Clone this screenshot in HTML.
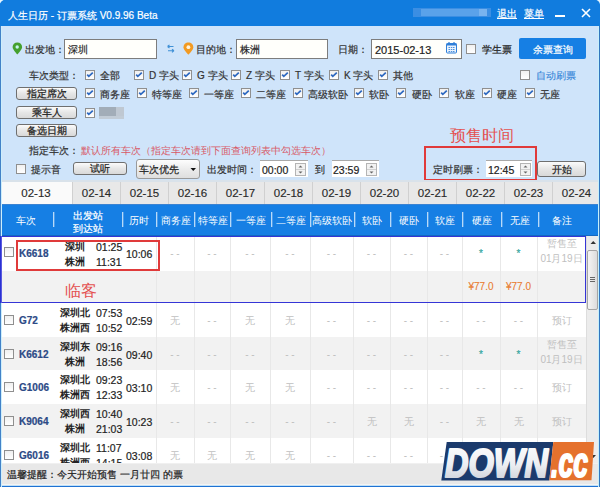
<!DOCTYPE html>
<html><head><meta charset="utf-8">
<style>
html,body{margin:0;padding:0;width:600px;height:487px;overflow:hidden;}
body{position:relative;background:#cfe4fa;font-family:"Liberation Sans",sans-serif;font-size:10px;color:#333;}
.a{position:absolute;}
.t{position:absolute;white-space:nowrap;line-height:12px;font-size:10px;-webkit-text-stroke:0.2px currentColor;margin-top:1px;}
#title{left:0;top:0;width:600px;height:26px;background:#117cde;}
.frame-l{left:0;top:26px;width:1px;height:461px;background:#4282c8;box-shadow:1px 0 0 #cdeefc;}
.frame-r{left:599px;top:26px;width:1px;height:461px;background:#3276be;box-shadow:-1px 0 0 #c6f0fc;}
.inp{position:absolute;background:#fffffb;border:1px solid #7d7d7d;box-sizing:border-box;}
.cb{position:absolute;width:10px;height:10px;box-sizing:border-box;border:1px solid #8f8f8f;background:linear-gradient(#f0f0f0,#ffffff);}
.btn{position:absolute;box-sizing:border-box;border:1px solid #6f6f6f;border-radius:3px;background:linear-gradient(#fbfbfb,#e6e6e6 50%,#d9d9d9);text-align:center;color:#222;}
.spin{position:absolute;width:12px;box-sizing:border-box;border:1px solid #b9b9b9;background:linear-gradient(#f3f3f3,#dedede);}
.tab{position:absolute;top:182px;height:22px;box-sizing:border-box;background:#e8e8e8;border-left:1px solid #d0d0d0;text-align:center;line-height:22px;font-size:11.5px;color:#2a2a2a;-webkit-text-stroke:0.15px #2a2a2a;}
.hd{position:absolute;top:205px;height:31px;line-height:31px;color:#fff;text-align:center;font-size:10px;}
.sep{position:absolute;top:212px;width:1px;height:15px;background:#b8daf8;box-shadow:1px 0 0 #4d9cea;}
.vl{position:absolute;width:1px;background:#e8e8e8;}
.g{color:#bfbfbf;-webkit-text-stroke:0;}
.bt{-webkit-text-stroke:0.25px #222;}
.tn{color:#2c4a86;font-weight:bold;font-size:10px;}
.st{color:#222;font-weight:bold;-webkit-text-stroke:0;}
.tm{color:#222;font-size:10.5px;}
</style></head>
<body>
<!-- title bar -->
<div id="title" class="a"></div>
<div class="t" style="left:8px;top:9px;color:#fff;font-size:10px;">人生日历 - 订票系统 V0.9.96 Beta</div>
<div class="a" style="left:413px;top:8px;width:78px;height:9px;background:#3b8ee3;"></div><div class="a" style="left:421px;top:9px;width:66px;height:7px;background:#5aa2ea;filter:blur(0.4px);"></div><div class="a" style="left:479px;top:9px;width:8px;height:7px;background:#78b3ef;"></div>
<div class="t" style="left:497px;top:7px;color:#fff;text-decoration:underline;">退出</div>
<div class="t" style="left:524px;top:7px;color:#fff;text-decoration:underline;">菜单</div>
<div class="a" style="left:555px;top:15px;width:10px;height:2px;background:#fff;"></div>
<svg class="a" style="left:581px;top:8px" width="10" height="10"><path d="M1 1L9 9M9 1L1 9" stroke="#fff" stroke-width="1.6"/></svg>

<svg class="a" style="left:0;top:0" width="4" height="4"><path d="M0 0H3.5Q1 1 0 3.5Z" fill="#e6f6ff"/></svg><svg class="a" style="left:596px;top:0" width="4" height="5"><path d="M0.5 0H4V4.5Q3.5 1 0.5 0Z" fill="#e6f6ff"/></svg>

<!-- row 1 -->
<svg class="a" style="left:12px;top:42px" width="11" height="13" viewBox="0 0 11 13"><path d="M5.3 0.6C2.6 0.6 0.6 2.6 0.6 5.1 0.6 7.9 5.3 12.6 5.3 12.6S10.1 7.9 10.1 5.1C10.1 2.6 8.1 0.6 5.3 0.6Z" fill="#45a02e"/><circle cx="5.2" cy="5" r="1.7" fill="#c6f5ee"/></svg>
<div class="t" style="left:25px;top:43px;">出发地：</div>
<div class="inp" style="left:64px;top:39px;width:93px;height:20px;"></div>
<div class="t" style="left:68px;top:43px;color:#222;">深圳</div>
<svg class="a" style="left:166px;top:44px" width="10" height="10" viewBox="0 0 10 10"><path d="M1.5 2.5H7.5M1.5 2.5L3.5 0.8M1.5 2.5L3.5 4M8 6.7H2M8 6.7L6 5.2M8 6.7L6 8.4" stroke="#3f90d6" stroke-width="1.1" fill="none"/></svg>
<svg class="a" style="left:183px;top:42px" width="11" height="13" viewBox="0 0 11 13"><path d="M5.4 0.5C2.6 0.5 0.5 2.6 0.5 5.2 0.5 8.1 5.4 12.6 5.4 12.6S10.3 8.1 10.3 5.2C10.3 2.6 8.2 0.5 5.4 0.5Z" fill="#f29a22"/><circle cx="5.4" cy="5.2" r="1.9" fill="#fff3dc"/></svg>
<div class="t" style="left:196px;top:43px;">目的地：</div>
<div class="inp" style="left:236px;top:39px;width:92px;height:20px;"></div>
<div class="t" style="left:240px;top:43px;color:#222;">株洲</div>
<div class="t" style="left:338px;top:43px;">日期：</div>
<div class="inp" style="left:371px;top:39px;width:91px;height:20px;"></div>
<div class="t" style="left:375px;top:43px;color:#222;font-size:11px;">2015-02-13</div>
<svg class="a" style="left:446px;top:42px" width="12" height="12" viewBox="0 0 12 12"><rect x="0.5" y="1.5" width="10" height="9.5" rx="1" fill="#eaf3fd" stroke="#2f7fd8"/><rect x="0.5" y="1.5" width="10" height="2" fill="#2f7fd8"/><path d="M3 0V2M8 0V2" stroke="#2f7fd8" stroke-width="1.2"/><g fill="#4d93de"><rect x="2.5" y="5" width="1.5" height="1"/><rect x="4.8" y="5" width="1.5" height="1"/><rect x="7" y="5" width="1.5" height="1"/><rect x="2.5" y="7" width="1.5" height="1"/><rect x="4.8" y="7" width="1.5" height="1"/><rect x="7" y="7" width="1.5" height="1"/><rect x="2.5" y="9" width="1.5" height="1"/><rect x="4.8" y="9" width="1.5" height="1"/><rect x="7" y="9" width="1.5" height="1"/></g></svg>
<div class="cb" style="left:466px;top:44px;"></div>
<div class="t bt" style="left:482px;top:43px;">学生票</div>
<div class="a" style="left:519px;top:38px;width:67px;height:21px;background:#167fe4;border-radius:2px;"></div>
<div class="t" style="left:519px;top:43px;width:67px;text-align:center;color:#fff;">余票查询</div>

<!-- row 2 -->
<div class="t" style="left:29px;top:69px;">车次类型：</div>
<div class="cb" style="left:85px;top:70px;"><svg width="8" height="8" style="position:absolute;left:0;top:0"><path d="M1.2 3.6L2.8 5.4L6.8 1.6" stroke="#2d68c0" stroke-width="1.7" fill="none"/></svg></div><div class="t" style="left:100px;top:69px;">全部</div>
<div class="cb" style="left:134px;top:70px;"><svg width="8" height="8" style="position:absolute;left:0;top:0"><path d="M1.2 3.6L2.8 5.4L6.8 1.6" stroke="#2d68c0" stroke-width="1.7" fill="none"/></svg></div><div class="t" style="left:149px;top:69px;">D 字头</div>
<div class="cb" style="left:182px;top:70px;"><svg width="8" height="8" style="position:absolute;left:0;top:0"><path d="M1.2 3.6L2.8 5.4L6.8 1.6" stroke="#2d68c0" stroke-width="1.7" fill="none"/></svg></div><div class="t" style="left:197px;top:69px;">G 字头</div>
<div class="cb" style="left:231px;top:70px;"><svg width="8" height="8" style="position:absolute;left:0;top:0"><path d="M1.2 3.6L2.8 5.4L6.8 1.6" stroke="#2d68c0" stroke-width="1.7" fill="none"/></svg></div><div class="t" style="left:246px;top:69px;">Z 字头</div>
<div class="cb" style="left:280px;top:70px;"><svg width="8" height="8" style="position:absolute;left:0;top:0"><path d="M1.2 3.6L2.8 5.4L6.8 1.6" stroke="#2d68c0" stroke-width="1.7" fill="none"/></svg></div><div class="t" style="left:295px;top:69px;">T 字头</div>
<div class="cb" style="left:329px;top:70px;"><svg width="8" height="8" style="position:absolute;left:0;top:0"><path d="M1.2 3.6L2.8 5.4L6.8 1.6" stroke="#2d68c0" stroke-width="1.7" fill="none"/></svg></div><div class="t" style="left:344px;top:69px;">K 字头</div>
<div class="cb" style="left:378px;top:70px;"><svg width="8" height="8" style="position:absolute;left:0;top:0"><path d="M1.2 3.6L2.8 5.4L6.8 1.6" stroke="#2d68c0" stroke-width="1.7" fill="none"/></svg></div><div class="t" style="left:393px;top:69px;">其他</div>
<div class="cb" style="left:520px;top:70px;"></div><div class="t" style="left:536px;top:69px;color:#3585d8;-webkit-text-stroke:0.1px #3585d8;">自动刷票</div>

<!-- row 3 -->
<div class="btn" style="left:16px;top:87px;width:61px;height:13px;"></div><div class="t bt" style="left:16px;top:87px;width:61px;text-align:center;color:#222;">指定席次</div>
<div class="cb" style="left:85px;top:88px;"><svg width="8" height="8" style="position:absolute;left:0;top:0"><path d="M1.2 3.6L2.8 5.4L6.8 1.6" stroke="#2d68c0" stroke-width="1.7" fill="none"/></svg></div><div class="t" style="left:100px;top:88px;">商务座</div>
<div class="cb" style="left:137px;top:88px;"><svg width="8" height="8" style="position:absolute;left:0;top:0"><path d="M1.2 3.6L2.8 5.4L6.8 1.6" stroke="#2d68c0" stroke-width="1.7" fill="none"/></svg></div><div class="t" style="left:152px;top:88px;">特等座</div>
<div class="cb" style="left:189px;top:88px;"><svg width="8" height="8" style="position:absolute;left:0;top:0"><path d="M1.2 3.6L2.8 5.4L6.8 1.6" stroke="#2d68c0" stroke-width="1.7" fill="none"/></svg></div><div class="t" style="left:204px;top:88px;">一等座</div>
<div class="cb" style="left:241px;top:88px;"><svg width="8" height="8" style="position:absolute;left:0;top:0"><path d="M1.2 3.6L2.8 5.4L6.8 1.6" stroke="#2d68c0" stroke-width="1.7" fill="none"/></svg></div><div class="t" style="left:256px;top:88px;">二等座</div>
<div class="cb" style="left:293px;top:88px;"><svg width="8" height="8" style="position:absolute;left:0;top:0"><path d="M1.2 3.6L2.8 5.4L6.8 1.6" stroke="#2d68c0" stroke-width="1.7" fill="none"/></svg></div><div class="t" style="left:308px;top:88px;">高级软卧</div>
<div class="cb" style="left:354px;top:88px;"><svg width="8" height="8" style="position:absolute;left:0;top:0"><path d="M1.2 3.6L2.8 5.4L6.8 1.6" stroke="#2d68c0" stroke-width="1.7" fill="none"/></svg></div><div class="t" style="left:369px;top:88px;">软卧</div>
<div class="cb" style="left:396px;top:88px;"><svg width="8" height="8" style="position:absolute;left:0;top:0"><path d="M1.2 3.6L2.8 5.4L6.8 1.6" stroke="#2d68c0" stroke-width="1.7" fill="none"/></svg></div><div class="t" style="left:412px;top:88px;">硬卧</div>
<div class="cb" style="left:439px;top:88px;"><svg width="8" height="8" style="position:absolute;left:0;top:0"><path d="M1.2 3.6L2.8 5.4L6.8 1.6" stroke="#2d68c0" stroke-width="1.7" fill="none"/></svg></div><div class="t" style="left:455px;top:88px;">软座</div>
<div class="cb" style="left:482px;top:88px;"><svg width="8" height="8" style="position:absolute;left:0;top:0"><path d="M1.2 3.6L2.8 5.4L6.8 1.6" stroke="#2d68c0" stroke-width="1.7" fill="none"/></svg></div><div class="t" style="left:497px;top:88px;">硬座</div>
<div class="cb" style="left:525px;top:88px;"><svg width="8" height="8" style="position:absolute;left:0;top:0"><path d="M1.2 3.6L2.8 5.4L6.8 1.6" stroke="#2d68c0" stroke-width="1.7" fill="none"/></svg></div><div class="t" style="left:540px;top:88px;">无座</div>

<!-- row 4,5 -->
<div class="btn" style="left:16px;top:106px;width:61px;height:13px;"></div><div class="t bt" style="left:16px;top:106px;width:61px;text-align:center;color:#222;">乘车人</div>
<div class="cb" style="left:85px;top:108px;"><svg width="8" height="8" style="position:absolute;left:0;top:0"><path d="M1.2 3.6L2.8 5.4L6.8 1.6" stroke="#2d68c0" stroke-width="1.7" fill="none"/></svg></div>
<div class="a" style="left:99px;top:116px;width:25px;height:3px;background:#c2ccd6;filter:blur(0.5px);"></div><div class="a" style="left:99px;top:107px;width:17px;height:9px;background:#a2adb8;filter:blur(0.5px);"></div><div class="a" style="left:116px;top:107px;width:8px;height:9px;background:#bfc8d2;filter:blur(0.5px);"></div>
<div class="btn" style="left:16px;top:124px;width:61px;height:13px;"></div><div class="t bt" style="left:16px;top:124px;width:61px;text-align:center;color:#222;">备选日期</div>

<!-- row 6 -->
<div class="t" style="left:29px;top:144px;">指定车次：</div>
<div class="t" style="left:81px;top:144px;color:#d85a68;-webkit-text-stroke:0;">默认所有车次（指定车次请到下面查询列表中勾选车次）</div>
<div class="t" style="left:450px;top:126px;color:#e45050;font-size:15.5px;line-height:18px;-webkit-text-stroke:0;">预售时间</div>

<!-- row 7 -->
<div class="cb" style="left:16px;top:164px;"></div><div class="t" style="left:31px;top:163px;">提示音</div>
<div class="btn" style="left:73px;top:162px;width:54px;height:13px;"></div><div class="t" style="left:73px;top:162px;width:54px;text-align:center;color:#222;">试听</div>
<div class="btn" style="left:136px;top:159px;width:64px;height:20px;border-color:#9a9a9a;background:linear-gradient(#fdfdfd,#ececec 50%,#dedede);"></div>
<div class="t" style="left:139px;top:163px;color:#222;">车次优先</div>
<svg class="a" style="left:190px;top:167px" width="7" height="5"><path d="M0.5 1H6L3.25 4Z" fill="#111"/></svg>
<div class="t" style="left:207px;top:163px;">出发时间：</div>
<div class="a" style="left:260px;top:160px;width:48px;height:17px;background:#fff;border-top:1px solid #a9a9a9;box-sizing:border-box;"></div>
<div class="t" style="left:262px;top:163px;color:#222;font-size:10.5px;">00:00</div>
<div class="a" style="left:295px;top:163px;width:11px;height:13px;"><svg width="11" height="13" style="position:absolute;left:0;top:0"><rect x="0.5" y="0.5" width="10" height="12" fill="#f2f2f2" stroke="#b4b4b4"/><path d="M1 6.5H10" stroke="#d0d0d0"/><path d="M3.5 4.5H7.5L5.5 2.5Z" fill="#666"/><path d="M3.5 8.5H7.5L5.5 10.5Z" fill="#666"/></svg></div>
<div class="t" style="left:315px;top:163px;">到</div>
<div class="a" style="left:332px;top:160px;width:47px;height:17px;background:#fff;border-top:1px solid #a9a9a9;box-sizing:border-box;"></div>
<div class="t" style="left:333px;top:163px;color:#222;font-size:10.5px;">23:59</div>
<div class="a" style="left:366px;top:163px;width:11px;height:13px;"><svg width="11" height="13" style="position:absolute;left:0;top:0"><rect x="0.5" y="0.5" width="10" height="12" fill="#f2f2f2" stroke="#b4b4b4"/><path d="M1 6.5H10" stroke="#d0d0d0"/><path d="M3.5 4.5H7.5L5.5 2.5Z" fill="#666"/><path d="M3.5 8.5H7.5L5.5 10.5Z" fill="#666"/></svg></div>
<div class="a" style="left:424px;top:146px;width:113px;height:35px;box-sizing:border-box;border:2px solid #e03a3a;"></div>
<div class="t" style="left:433px;top:163px;">定时刷票：</div>
<div class="a" style="left:486px;top:160px;width:46px;height:17px;background:#fff;border-top:1px solid #a9a9a9;box-sizing:border-box;"></div>
<div class="t" style="left:488px;top:163px;color:#222;font-size:10.5px;">12:45</div>
<div class="a" style="left:520px;top:163px;width:11px;height:13px;"><svg width="11" height="13" style="position:absolute;left:0;top:0"><rect x="0.5" y="0.5" width="10" height="12" fill="#f2f2f2" stroke="#b4b4b4"/><path d="M1 6.5H10" stroke="#d0d0d0"/><path d="M3.5 4.5H7.5L5.5 2.5Z" fill="#666"/><path d="M3.5 8.5H7.5L5.5 10.5Z" fill="#666"/></svg></div>
<div class="btn" style="left:537px;top:161px;width:49px;height:16px;"></div><div class="t" style="left:537px;top:163px;width:49px;text-align:center;color:#222;">开始</div>

<!-- tabs -->
<div class="a" style="left:0;top:180px;width:600px;height:2px;background:#d9e2ea;"></div>
<div class="tab" style="left:0;width:72px;background:#fafafa;border-left:none;">02-13</div>
<div class="tab" style="left:72px;width:48px;">02-14</div>
<div class="tab" style="left:120px;width:48px;">02-15</div>
<div class="tab" style="left:168px;width:48px;">02-16</div>
<div class="tab" style="left:216px;width:48px;">02-17</div>
<div class="tab" style="left:264px;width:48px;">02-18</div>
<div class="tab" style="left:312px;width:48px;">02-19</div>
<div class="tab" style="left:360px;width:48px;">02-20</div>
<div class="tab" style="left:408px;width:48px;">02-21</div>
<div class="tab" style="left:456px;width:48px;">02-22</div>
<div class="tab" style="left:504px;width:48px;">02-23</div>
<div class="tab" style="left:552px;width:48px;">02-24</div>

<!-- header -->
<div class="a" style="left:0;top:204px;width:600px;height:32px;background:#167fe4;"></div><div class="a" style="left:0;top:204px;width:600px;height:1px;background:#3b83d2;"></div>
<div class="a" style="left:0;top:235px;width:600px;height:1px;background:#1468c0;"></div>
<div class="hd" style="left:0;width:52px;">车次</div>
<div class="t" style="left:53px;top:208px;width:69px;text-align:center;color:#fff;line-height:13px;">出发站<br>到达站</div>
<div class="hd" style="left:122px;width:34px;">历时</div>
<div class="hd" style="left:156px;width:39px;">商务座</div>
<div class="hd" style="left:195px;width:35px;">特等座</div>
<div class="hd" style="left:230px;width:41px;">一等座</div>
<div class="hd" style="left:271px;width:39px;">二等座</div>
<div class="hd" style="left:310px;width:44px;">高级软卧</div>
<div class="hd" style="left:354px;width:36px;">软卧</div>
<div class="hd" style="left:390px;width:37px;">硬卧</div>
<div class="hd" style="left:427px;width:35px;">软座</div>
<div class="hd" style="left:462px;width:39px;">硬座</div>
<div class="hd" style="left:501px;width:37px;">无座</div>
<div class="hd" style="left:538px;width:48px;">备注</div>
<div class="sep" style="left:53px"></div><div class="sep" style="left:122px"></div><div class="sep" style="left:156px"></div><div class="sep" style="left:194px"></div><div class="sep" style="left:230px"></div><div class="sep" style="left:271px"></div><div class="sep" style="left:310px"></div><div class="sep" style="left:354px"></div><div class="sep" style="left:390px"></div><div class="sep" style="left:427px"></div><div class="sep" style="left:462px"></div><div class="sep" style="left:501px"></div><div class="sep" style="left:538px"></div>

<!-- body rows -->
<div class="a" style="left:1px;top:236px;width:585px;height:35px;background:#fff;"></div>
<div class="a" style="left:1px;top:271px;width:585px;height:31px;background:#f2f2f2;"></div>
<div class="a" style="left:1px;top:303px;width:585px;height:34px;background:#fff;"></div>
<div class="a" style="left:1px;top:337px;width:585px;height:33px;background:#f2f2f2;"></div>
<div class="a" style="left:1px;top:370px;width:585px;height:34px;background:#fff;"></div>
<div class="a" style="left:1px;top:404px;width:585px;height:34px;background:#f2f2f2;"></div>
<div class="a" style="left:1px;top:438px;width:585px;height:25px;background:#fff;"></div>
<!-- grid lines -->
<div class="vl" style="left:156px;top:236px;height:227px"></div>
<div class="vl" style="left:194px;top:236px;height:227px"></div>
<div class="vl" style="left:230px;top:236px;height:227px"></div>
<div class="vl" style="left:270px;top:236px;height:227px"></div>
<div class="vl" style="left:310px;top:236px;height:227px"></div>
<div class="vl" style="left:353px;top:236px;height:227px"></div>
<div class="vl" style="left:390px;top:236px;height:227px"></div>
<div class="vl" style="left:427px;top:236px;height:227px"></div>
<div class="vl" style="left:462px;top:236px;height:227px"></div>
<div class="vl" style="left:500px;top:236px;height:227px"></div>
<div class="vl" style="left:537px;top:236px;height:227px"></div>
<!-- selection border -->
<div class="a" style="left:0;top:236px;width:586px;height:67px;box-sizing:border-box;border:1px solid #3535d6;"></div>

<!-- row K6618 -->
<div class="cb" style="left:4px;top:247px;"></div>
<div class="t tn" style="left:19px;top:247px;">K6618</div>
<div class="t st" style="left:65px;top:240px;">深圳</div>
<div class="t st" style="left:65px;top:255px;">株洲</div>
<div class="t tm" style="left:96px;top:240px;">01:25</div>
<div class="t tm" style="left:96px;top:255px;">11:31</div>
<div class="t tm" style="left:126px;top:247px;">10:06</div>
<div class="a" style="left:16px;top:240px;width:144px;height:31px;box-sizing:border-box;border:2px solid #e03a3a;"></div>
<div class="t g" style="left:156px;top:247px;width:38px;text-align:center;">- -</div>
<div class="t g" style="left:194px;top:247px;width:36px;text-align:center;">- -</div>
<div class="t g" style="left:230px;top:247px;width:40px;text-align:center;">- -</div>
<div class="t g" style="left:270px;top:247px;width:40px;text-align:center;">- -</div>
<div class="t g" style="left:310px;top:247px;width:43px;text-align:center;">- -</div>
<div class="t g" style="left:353px;top:247px;width:37px;text-align:center;">- -</div>
<div class="t g" style="left:390px;top:247px;width:37px;text-align:center;">- -</div>
<div class="t g" style="left:427px;top:247px;width:35px;text-align:center;">- -</div>
<div class="t" style="left:462px;top:247px;width:38px;text-align:center;color:#33a6a0;">*</div>
<div class="t" style="left:500px;top:247px;width:37px;text-align:center;color:#33a6a0;">*</div>
<div class="t g" style="left:537px;top:235px;width:49px;text-align:center;line-height:15px;">暂售至<br>01月19日</div>
<div class="t" style="left:65px;top:281px;color:#e45050;font-size:16px;line-height:18px;-webkit-text-stroke:0;">临客</div>
<div class="t" style="left:462px;top:280px;width:38px;text-align:center;color:#e97c30;-webkit-text-stroke:0.1px #e97c30;">¥77.0</div>
<div class="t" style="left:500px;top:280px;width:37px;text-align:center;color:#e97c30;-webkit-text-stroke:0.1px #e97c30;">¥77.0</div>

<!-- other rows -->
<div id="rows"></div><div class="cb" style="left:4px;top:315px;"></div>
<div class="t tn" style="left:19px;top:314px;">G72</div>
<div class="t st" style="left:58px;top:306px;width:34px;text-align:center;">深圳北</div>
<div class="t st" style="left:58px;top:321px;width:34px;text-align:center;">株洲西</div>
<div class="t tm" style="left:96px;top:306px;">07:53</div>
<div class="t tm" style="left:96px;top:321px;">10:52</div>
<div class="t tm" style="left:126px;top:314px;">02:59</div>
<div class="t g" style="left:156px;top:314px;width:38px;text-align:center;">无</div>
<div class="t g" style="left:194px;top:314px;width:36px;text-align:center;">- -</div>
<div class="t g" style="left:230px;top:314px;width:40px;text-align:center;">无</div>
<div class="t g" style="left:270px;top:314px;width:40px;text-align:center;">无</div>
<div class="t g" style="left:310px;top:314px;width:43px;text-align:center;">- -</div>
<div class="t g" style="left:353px;top:314px;width:37px;text-align:center;">- -</div>
<div class="t g" style="left:390px;top:314px;width:37px;text-align:center;">- -</div>
<div class="t g" style="left:427px;top:314px;width:35px;text-align:center;">- -</div>
<div class="t g" style="left:462px;top:314px;width:38px;text-align:center;">- -</div>
<div class="t g" style="left:500px;top:314px;width:37px;text-align:center;">- -</div>
<div class="t g" style="left:537px;top:314px;width:49px;text-align:center;">预订</div>
<div class="cb" style="left:4px;top:349px;"></div>
<div class="t tn" style="left:19px;top:348px;">K6612</div>
<div class="t st" style="left:58px;top:340px;width:34px;text-align:center;">深圳东</div>
<div class="t st" style="left:58px;top:355px;width:34px;text-align:center;">株洲</div>
<div class="t tm" style="left:96px;top:340px;">09:16</div>
<div class="t tm" style="left:96px;top:355px;">18:56</div>
<div class="t tm" style="left:126px;top:348px;">09:40</div>
<div class="t g" style="left:156px;top:348px;width:38px;text-align:center;">- -</div>
<div class="t g" style="left:194px;top:348px;width:36px;text-align:center;">- -</div>
<div class="t g" style="left:230px;top:348px;width:40px;text-align:center;">- -</div>
<div class="t g" style="left:270px;top:348px;width:40px;text-align:center;">- -</div>
<div class="t g" style="left:310px;top:348px;width:43px;text-align:center;">- -</div>
<div class="t g" style="left:353px;top:348px;width:37px;text-align:center;">- -</div>
<div class="t g" style="left:390px;top:348px;width:37px;text-align:center;">- -</div>
<div class="t g" style="left:427px;top:348px;width:35px;text-align:center;">- -</div>
<div class="t" style="left:462px;top:348px;width:38px;text-align:center;color:#33a6a0;">*</div>
<div class="t" style="left:500px;top:348px;width:37px;text-align:center;color:#33a6a0;">*</div>
<div class="t g" style="left:537px;top:336px;width:49px;text-align:center;line-height:15px;">暂售至<br>01月19日</div>
<div class="cb" style="left:4px;top:382px;"></div>
<div class="t tn" style="left:19px;top:381px;">G1006</div>
<div class="t st" style="left:58px;top:373px;width:34px;text-align:center;">深圳北</div>
<div class="t st" style="left:58px;top:388px;width:34px;text-align:center;">株洲西</div>
<div class="t tm" style="left:96px;top:373px;">09:23</div>
<div class="t tm" style="left:96px;top:388px;">12:33</div>
<div class="t tm" style="left:126px;top:381px;">03:10</div>
<div class="t g" style="left:156px;top:381px;width:38px;text-align:center;">无</div>
<div class="t g" style="left:194px;top:381px;width:36px;text-align:center;">- -</div>
<div class="t g" style="left:230px;top:381px;width:40px;text-align:center;">无</div>
<div class="t g" style="left:270px;top:381px;width:40px;text-align:center;">无</div>
<div class="t g" style="left:310px;top:381px;width:43px;text-align:center;">- -</div>
<div class="t g" style="left:353px;top:381px;width:37px;text-align:center;">- -</div>
<div class="t g" style="left:390px;top:381px;width:37px;text-align:center;">- -</div>
<div class="t g" style="left:427px;top:381px;width:35px;text-align:center;">- -</div>
<div class="t g" style="left:462px;top:381px;width:38px;text-align:center;">- -</div>
<div class="t g" style="left:500px;top:381px;width:37px;text-align:center;">- -</div>
<div class="t g" style="left:537px;top:381px;width:49px;text-align:center;">预订</div>
<div class="cb" style="left:4px;top:416px;"></div>
<div class="t tn" style="left:19px;top:415px;">K9064</div>
<div class="t st" style="left:58px;top:407px;width:34px;text-align:center;">深圳西</div>
<div class="t st" style="left:58px;top:422px;width:34px;text-align:center;">株洲</div>
<div class="t tm" style="left:96px;top:407px;">10:40</div>
<div class="t tm" style="left:96px;top:422px;">21:03</div>
<div class="t tm" style="left:126px;top:415px;">10:23</div>
<div class="t g" style="left:156px;top:415px;width:38px;text-align:center;">- -</div>
<div class="t g" style="left:194px;top:415px;width:36px;text-align:center;">- -</div>
<div class="t g" style="left:230px;top:415px;width:40px;text-align:center;">- -</div>
<div class="t g" style="left:270px;top:415px;width:40px;text-align:center;">- -</div>
<div class="t g" style="left:310px;top:415px;width:43px;text-align:center;">- -</div>
<div class="t g" style="left:353px;top:415px;width:37px;text-align:center;">无</div>
<div class="t g" style="left:390px;top:415px;width:37px;text-align:center;">无</div>
<div class="t g" style="left:427px;top:415px;width:35px;text-align:center;">- -</div>
<div class="t g" style="left:462px;top:415px;width:38px;text-align:center;">无</div>
<div class="t g" style="left:500px;top:415px;width:37px;text-align:center;">无</div>
<div class="t g" style="left:537px;top:415px;width:49px;text-align:center;">预订</div>
<div class="cb" style="left:4px;top:450px;"></div>
<div class="t tn" style="left:19px;top:449px;">G6016</div>
<div class="t st" style="left:58px;top:441px;width:34px;text-align:center;">深圳北</div>
<div class="t st" style="left:58px;top:456px;width:34px;text-align:center;">株洲西</div>
<div class="t tm" style="left:96px;top:441px;">11:07</div>
<div class="t tm" style="left:96px;top:456px;">14:15</div>
<div class="t tm" style="left:126px;top:449px;">03:08</div>
<div class="t g" style="left:156px;top:449px;width:38px;text-align:center;">无</div>
<div class="t g" style="left:194px;top:449px;width:36px;text-align:center;">无</div>
<div class="t g" style="left:230px;top:449px;width:40px;text-align:center;">无</div>
<div class="t g" style="left:270px;top:449px;width:40px;text-align:center;">无</div>
<div class="t g" style="left:310px;top:449px;width:43px;text-align:center;">- -</div>
<div class="t g" style="left:353px;top:449px;width:37px;text-align:center;">- -</div>
<div class="t g" style="left:390px;top:449px;width:37px;text-align:center;">- -</div>
<div class="t g" style="left:427px;top:449px;width:35px;text-align:center;">- -</div>
<div class="t g" style="left:462px;top:449px;width:38px;text-align:center;">- -</div>
<div class="t g" style="left:500px;top:449px;width:37px;text-align:center;">- -</div>
<div class="t g" style="left:537px;top:449px;width:49px;text-align:center;">预订</div><!--endrows-->

<!-- scrollbar -->
<div class="a" style="left:586px;top:236px;width:13px;height:227px;background:#ececec;border-left:1px solid #ddd;box-sizing:border-box;"></div>
<svg class="a" style="left:590px;top:240px" width="7" height="5"><path d="M0.5 4H6L3.25 1Z" fill="#333"/></svg>
<div class="a" style="left:587px;top:250px;width:11px;height:60px;box-sizing:border-box;border:1px solid #a5a5a5;border-radius:2px;background:linear-gradient(90deg,#f4f4f4,#dcdcdc);"></div>
<svg class="a" style="left:590px;top:454px" width="7" height="5"><path d="M0.5 1H6L3.25 4Z" fill="#333"/></svg>
<div class="a" style="left:590px;top:277px;width:5px;height:1px;background:#666;"></div>
<div class="a" style="left:590px;top:279px;width:5px;height:1px;background:#666;"></div>
<div class="a" style="left:590px;top:281px;width:5px;height:1px;background:#666;"></div>

<!-- status bar -->
<div class="a" style="left:1px;top:463px;width:598px;height:21px;background:#e8e8e8;border-top:1px solid #f0f0f0;box-sizing:border-box;"></div>
<div class="t" style="left:7px;top:468px;color:#222;">温馨提醒：今天开始预售 一月廿四 的票</div>
<div class="a" style="left:0;top:484px;width:600px;height:1px;background:#f4f4f4;"></div><div class="a" style="left:0;top:485px;width:600px;height:1px;background:#bfe0f8;"></div><div class="a" style="left:0;top:486px;width:600px;height:1px;background:#1f72d2;"></div>

<div class="a frame-l"></div><div class="a frame-r"></div><div class="a" style="left:0;top:236px;width:1px;height:67px;background:#2a32d2;box-shadow:1px 0 0 #5a5ae0;"></div>
<!-- logo -->
<svg class="a" style="left:440px;top:441px" width="160" height="46" viewBox="0 0 160 46">
<defs><linearGradient id="lg" x1="0" y1="0" x2="0" y2="1"><stop offset="0" stop-color="#ffffff"/><stop offset="0.55" stop-color="#eceef2"/><stop offset="1" stop-color="#c5c9d2"/></linearGradient></defs>
<path d="M6.7 1H113.3L109.3 39.5H1.3Z" fill="#1b3a6c"/>
<path d="M113.3 1H154L151.5 39.2H109.3Z" fill="#e5712d"/>
<text x="5" y="35.8" font-family="Liberation Sans" font-weight="bold" font-style="italic" font-size="41" fill="url(#lg)" stroke="url(#lg)" stroke-width="2.2" stroke-linejoin="round" textLength="103" lengthAdjust="spacingAndGlyphs">DOWN</text>
<text x="111" y="35.5" font-family="Liberation Sans" font-weight="bold" font-style="italic" font-size="43" fill="#fff" stroke="#fff" stroke-width="2" stroke-linejoin="round" textLength="37" lengthAdjust="spacingAndGlyphs">.cc</text>
</svg>
</body></html>
